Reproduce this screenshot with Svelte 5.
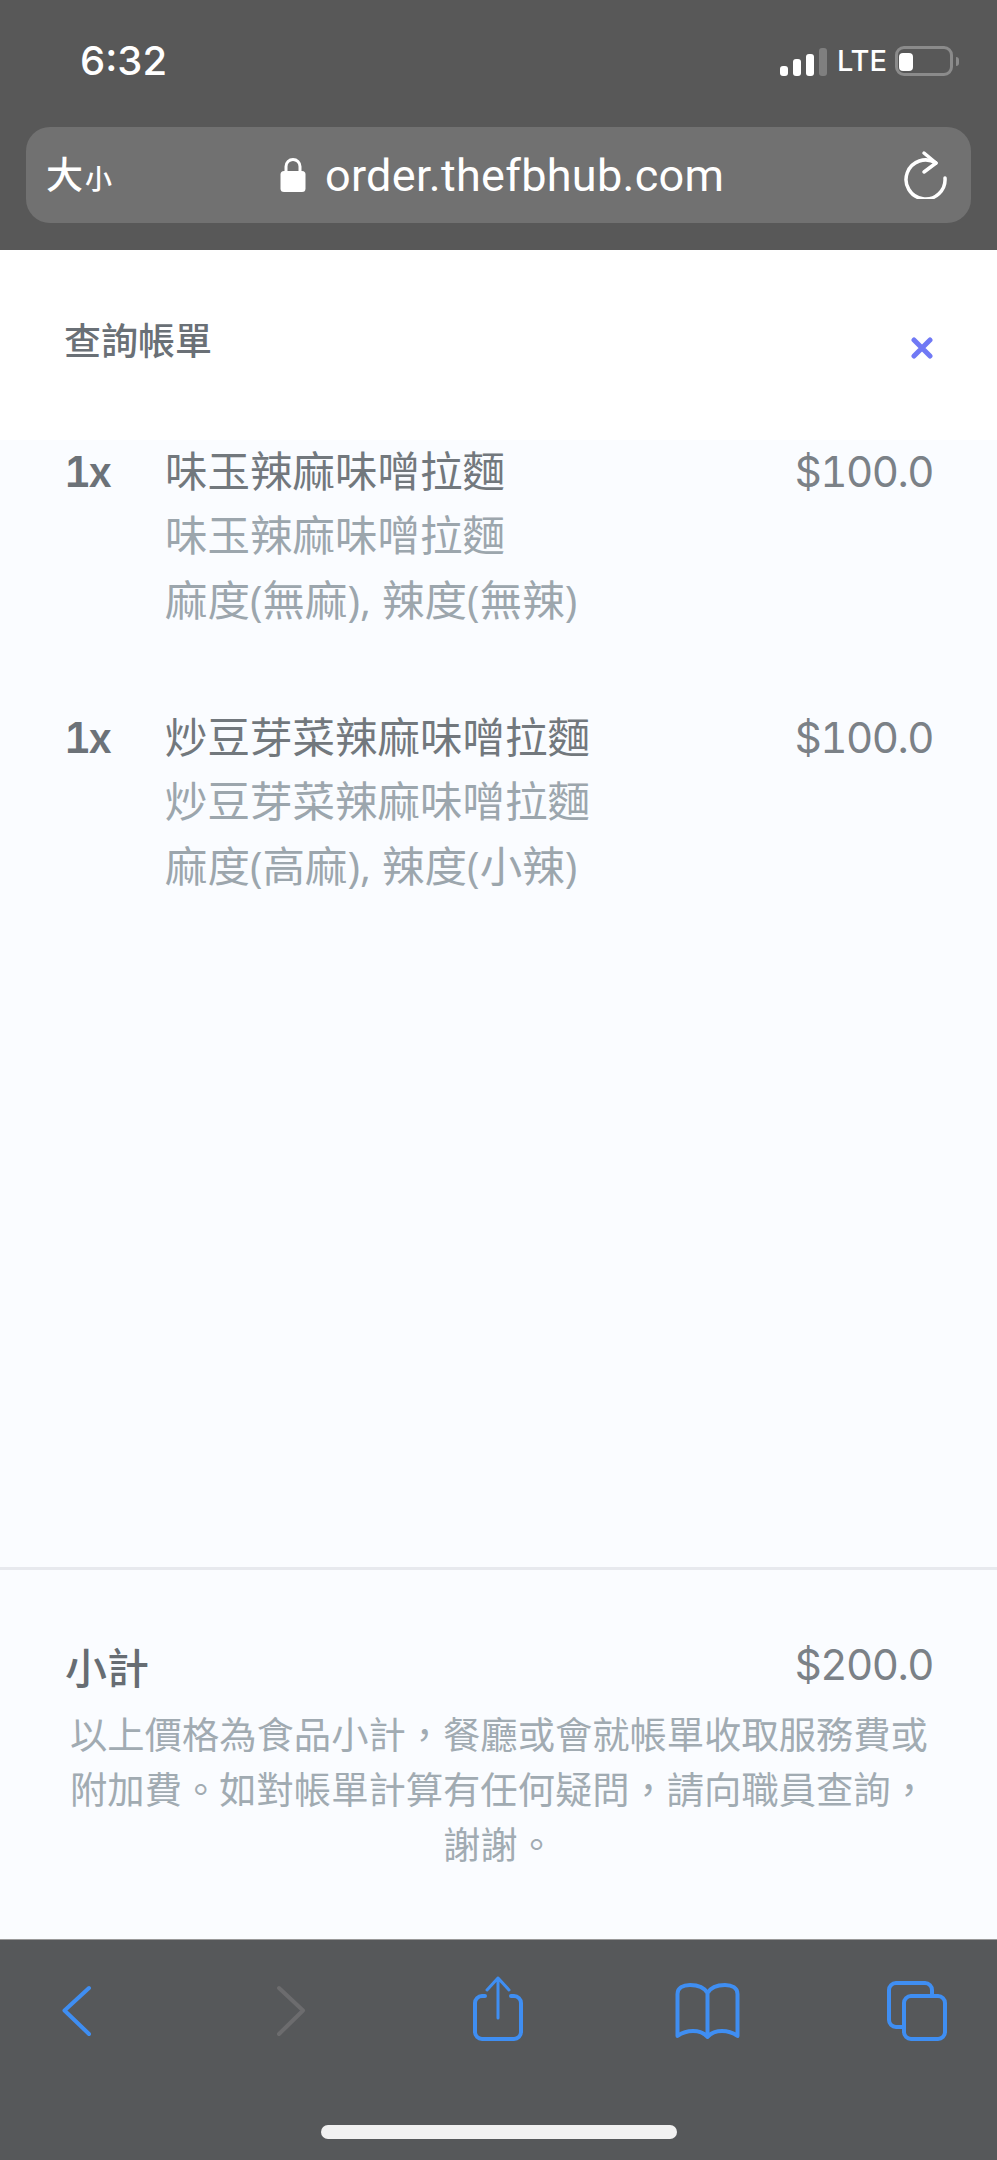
<script>
  const items = [
    { name: '味玉辣麻味噌拉麵', opts: '麻度(無麻), 辣度(無辣)' },
    { name: '炒豆芽菜辣麻味噌拉麵', opts: '麻度(高麻), 辣度(小辣)' }
  ];
</script>

<div class="page">
  <header class="browser">
    <div class="status">
      <span class="time">6:32</span>
      <div class="indicators">
        <div class="signal">
          <i class="b1"></i><i class="b2"></i><i class="b3"></i><i class="b4"></i>
        </div>
        <span class="lte">LTE</span>
        <div class="battery"><i></i></div>
        <div class="nub"></div>
      </div>
    </div>
    <div class="addr">
      <div class="aa"><span class="big">大</span><span class="small">小</span></div>
      <div class="url">
        <svg class="lock" viewBox="0 0 26 36" width="26" height="36">
          <path d="M6 16V9.500a7 7 0 0 1 14 0V16" fill="none" stroke="#fff" stroke-width="3"/>
          <rect x="0.5" y="14" width="25" height="21" rx="3.5" fill="#fff"/>
        </svg>
        <span>order.thefbhub.com</span>
      </div>
      <svg class="reload" viewBox="0 0 44 52" width="44" height="52">
        <path d="M42 31A19.500 19.500 0 1 1 33 16" fill="none" stroke="#fff" stroke-width="3.500" stroke-linecap="round"/>
        <path d="M21 6L33 16L21 25" fill="none" stroke="#fff" stroke-width="3.500" stroke-linecap="round" stroke-linejoin="round"/>
      </svg>
    </div>
  </header>

  <div class="sheet-head">
    <h1>查詢帳單</h1>
    <svg class="close" viewBox="0 0 24 22" width="24" height="22">
      <path d="M4 3L20 19M20 3L4 19" stroke="#7079f5" stroke-width="5" stroke-linecap="round" fill="none"/>
    </svg>
  </div>

  <main class="list">
    {#each items as item}
      <div class="row">
        <div class="qty">1x</div>
        <div class="info">
          <div class="name">{item.name}</div>
          <div class="sub">{item.name}</div>
          <div class="sub opts">{item.opts}</div>
        </div>
        <div class="price">$100.0</div>
      </div>
    {/each}
  </main>

  <section class="foot">
    <div class="total">
      <span class="label">小計</span>
      <span class="price">$200.0</span>
    </div>
    <p class="note">以上價格為食品小計&#65292;餐廳或會就帳單收取服務費或附加費。如對帳單計算有任何疑問&#65292;請向職員查詢&#65292;謝謝。</p>
  </section>

  <nav class="toolbar">
    <div class="icons">
      <svg viewBox="0 0 70 70" width="70" height="70"><path d="M48 13L23.500 35.500L48 59" class="ic"/></svg>
      <svg viewBox="0 0 70 70" width="70" height="70"><path d="M28 13L52 35.500L28 59" class="ic off"/></svg>
      <svg viewBox="0 0 70 70" width="70" height="70">
        <path d="M24 21H21a7 7 0 0 0-7 7V57a7 7 0 0 0 7 7H53a7 7 0 0 0 7-7V28a7 7 0 0 0-7-7H50" class="ic"/>
        <path d="M37 43V3M26 15L37 3L48 15" class="ic thin"/>
      </svg>
      <svg viewBox="0 0 70 70" width="70" height="70">
        <path d="M36.500 18C33 12 25 10 19 10C12 10 6.500 13 6.500 19V61C12 57 17 56 22 56C28 56 33 58 36.500 62C40 58 45 56 51 56C56 56 61 57 66.500 61V19C66.500 13 61 10 54 10C48 10 40 12 36.500 18V62" class="ic"/>
      </svg>
      <svg viewBox="0 0 70 70" width="70" height="70">
        <path d="M23 52H15a7 7 0 0 1-7-7V15a7 7 0 0 1 7-7H44a7 7 0 0 1 7 7V21" class="ic"/>
        <rect x="23" y="21" width="41" height="43" rx="7" class="ic"/>
      </svg>
    </div>
    <div class="home"></div>
  </nav>
</div>

<style>
  :global(body) {
    margin: 0;
    background: #fafcff;
  }
  .page {
    width: 997px;
    height: 2160px;
    display: flex;
    flex-direction: column;
    overflow: hidden;
    font-family: Inter, "Noto Sans CJK TC", sans-serif;
  }
  .browser {
    height: 250px;
    background: #585858;
    padding: 0 26px;
    box-sizing: border-box;
    color: #fff;
    flex: none;
  }
  .status {
    height: 127px;
    display: flex;
    align-items: flex-start;
    justify-content: space-between;
  }
  .time {
    margin: 38px 0 0 54px;
    font-size: 40px;
    line-height: 46px;
    font-weight: 500;
  }
  .indicators {
    display: flex;
    align-items: center;
    margin: 46px 12px 0 0;
    height: 30px;
  }
  .signal {
    display: flex;
    align-items: flex-end;
    gap: 5px;
    height: 29px;
  }
  .signal i {
    display: block;
    width: 8px;
    border-radius: 3px;
    background: #fff;
  }
  .b1 { height: 10px; }
  .b2 { height: 17px; }
  .b3 { height: 22px; }
  .signal .b4 { height: 28px; background: #7f7f7f; }
  .lte {
    margin-left: 10px;
    font-size: 29px;
    line-height: 30px;
    font-weight: 500;
  }
  .battery {
    margin-left: 8px;
    width: 58px;
    height: 30px;
    box-sizing: border-box;
    border: 3px solid #8b8b8b;
    border-radius: 9px;
    padding: 4px 1px;
  }
  .battery i {
    display: block;
    width: 14px;
    height: 18px;
    background: #fff;
    border-radius: 4px;
  }
  .nub {
    margin-left: 3px;
    width: 3px;
    height: 9px;
    background: #8b8b8b;
    border-radius: 0 3px 3px 0;
  }
  .addr {
    height: 96px;
    background: #717171;
    border-radius: 24px;
    display: flex;
    align-items: center;
    padding: 0 24px 0 20px;
  }
  .aa {
    display: flex;
    align-items: baseline;
    width: 70px;
    line-height: 1;
  }
  .big { font-size: 37px; font-weight: 500; }
  .small { font-size: 27px; font-weight: 500; margin-left: 2px; }
  .url {
    flex: 1;
    display: flex;
    align-items: center;
    gap: 19px;
    margin-left: 164px;
    font-size: 45px;
    font-family: Roboto, sans-serif;
    letter-spacing: 0.3px;
  }
  .lock { flex: none; }
  .reload { flex: none; margin-top: -4px; }
  .sheet-head {
    height: 190px;
    background: #fff;
    flex: none;
    box-sizing: border-box;
    padding: 68px 63px 0 64px;
    display: flex;
    justify-content: space-between;
    align-items: flex-start;
  }
  h1 {
    margin: 0;
    font-size: 37px;
    line-height: 48px;
    font-weight: 500;
    color: #6a7076;
  }
  .close { margin-top: 19px; }
  .list {
    flex: 1;
    background: #fafcff;
    padding: 0 64px 0 64px;
  }
  .row {
    display: flex;
    height: 266px;
    align-items: flex-start;
  }
  .qty {
    width: 101px;
    font-size: 42px;
    line-height: 64px;
    font-weight: 600;
    letter-spacing: -3px;
    color: #6c7278;
    flex: none;
    font-variant-numeric: tabular-nums;
  }
  .info {
    flex: 1;
    font-size: 42.5px;
    line-height: 64px;
  }
  .name { color: #72787d; }
  .sub { color: #9ca6ad; }
  .opts { font-family: "Open Sans", "Noto Sans CJK TC", sans-serif; }
  .price {
    font-size: 42px;
    line-height: 64px;
    letter-spacing: -1.5px;
    color: #7b8187;
    font-variant-numeric: tabular-nums;
  }
  .foot {
    flex: none;
    height: 372px;
    box-sizing: border-box;
    border-top: 3px solid #e7e9ee;
    padding: 63px 64px 0 65px;
    background: #fafcff;
  }
  .total {
    display: flex;
    justify-content: space-between;
    align-items: center;
    height: 64px;
  }
  .label {
    font-size: 42px;
    font-weight: 500;
    color: #676d73;
  }
  .note {
    margin: 11px 0 0;
    font-size: 37.3px;
    line-height: 55px;
    text-align: center;
    color: #a1abb2;
  }
  .toolbar {
    flex: none;
    height: 221px;
    background: #56585a;
    border-top: 1px solid #9a9a9a;
    box-sizing: border-box;
    padding-top: 35px;
  }
  .icons {
    display: flex;
    justify-content: space-between;
    padding: 0 46px 0 41px;
    height: 70px;
  }
  .ic {
    fill: none;
    stroke: #3f8ef2;
    stroke-width: 4px;
    stroke-linejoin: round;
    stroke-linecap: round;
  }
  .ic.thin { stroke-width: 3px; }
  .ic.off { stroke: #6c6c6e; }
  .home {
    width: 356px;
    height: 14px;
    margin: 80px auto 0;
    background: #f1f1f1;
    border-radius: 7px;
  }
</style>
